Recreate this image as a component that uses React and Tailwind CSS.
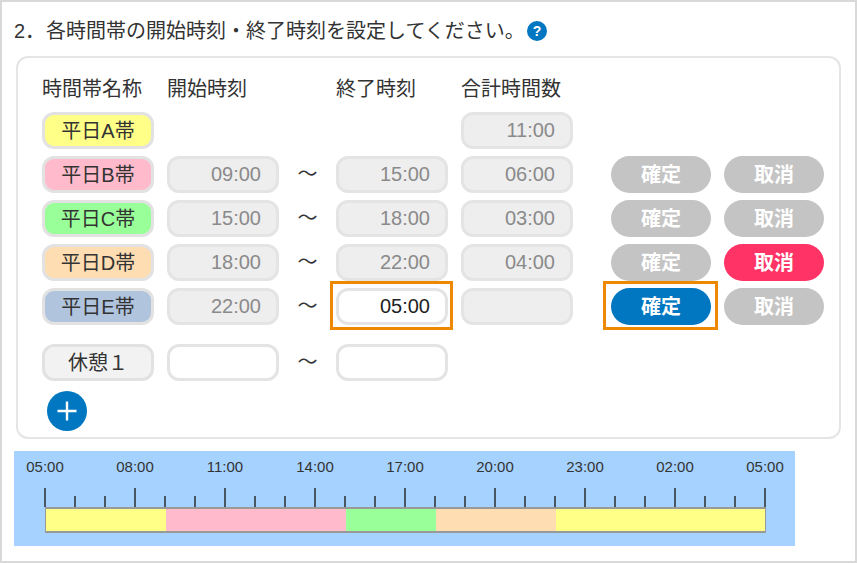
import React from 'react';

const rows = [
  { name: '平日A帯', color: 'bg-[#ffff88]', total: '11:00' },
  { name: '平日B帯', color: 'bg-[#ffbbcc]', start: '09:00', end: '15:00', total: '06:00' },
  { name: '平日C帯', color: 'bg-[#99ff99]', start: '15:00', end: '18:00', total: '03:00' },
  { name: '平日D帯', color: 'bg-[#ffddb3]', start: '18:00', end: '22:00', total: '04:00', cancelOn: true },
  { name: '平日E帯', color: 'bg-[#b0c4de]', start: '22:00', end: '05:00', total: '', active: true, cancelOn: false },
];

const labels = ['05:00', '08:00', '11:00', '14:00', '17:00', '20:00', '23:00', '02:00', '05:00'];

const segments = [
  { w: 'w-[120px]', color: 'bg-[#ffff88]' },
  { w: 'w-[180px]', color: 'bg-[#ffbbcc]' },
  { w: 'w-[90px]', color: 'bg-[#99ff99]' },
  { w: 'w-[120px]', color: 'bg-[#ffddb3]' },
  { w: 'w-[209px]', color: 'bg-[#ffff88]' },
];

const NamePill = ({ color, children }) => (
  <div className={`w-[112px] h-[37px] rounded-[12px] border-[3px] border-[#e2e2e2] flex items-center justify-center text-[20px] text-[#333] ${color}`}>
    {children}
  </div>
);

const TimeBox = ({ value, white, dark }) => (
  <div className={`w-[112px] h-[37px] rounded-[12px] border-[3px] border-[#e4e4e4] flex items-center justify-end pr-[15px] pb-[2px] text-[20px] ${white ? 'bg-white' : 'bg-[#eeeeee]'} ${dark ? 'text-[#222]' : 'text-[#8a8a8a]'}`}>
    {value}
  </div>
);

const Pill = ({ color, children }) => (
  <div className={`w-[100px] h-[37px] rounded-full flex items-center justify-center pt-[1px] text-[20px] font-bold text-white ${color}`}>
    {children}
  </div>
);

const Tilde = () => <div className="w-[57px] flex items-center justify-center pb-[2px] text-[20px] text-[#333]">～</div>;

// time scale ticks, one per hour
const Ticks = () => {
  const ticks = [];
  for (let i = 0; i <= 24; i++) {
    const major = i % 3 === 0;
    ticks.push(<line key={i} x1={i * 30 + 1} x2={i * 30 + 1} y1={major ? 0 : 8} y2={19} stroke="#222" strokeWidth="1.4" />);
  }
  return (
    <svg width="722" height="19" className="block ml-[30px]">
      {ticks}
    </svg>
  );
};

export default function App() {
  return (
    <div
      className="w-[857px] h-[563px] border-2 border-[#d9d9d9] bg-white text-[#333] overflow-hidden"
      style={{ fontFamily: '"Liberation Sans", "Noto Sans CJK JP", sans-serif' }}
    >
      {/* title */}
      <div className="flex items-center h-[54px] pl-[12px] pt-[4px] text-[20px] leading-none">
        <span className="w-[32px] whitespace-nowrap">2．</span>
        <span>各時間帯の開始時刻・終了時刻を設定してください。</span>
        <svg width="20" height="20" viewBox="0 0 20 20" className="ml-[2px]">
          <circle cx="10" cy="10" r="10" fill="#0077c0" />
          <text x="10" y="15" textAnchor="middle" fontSize="14" fontWeight="bold" fill="#fff">?</text>
        </svg>
      </div>

      {/* card */}
      <div className="ml-[14px] w-[825px] h-[383px] border-2 border-[#e5e5e5] rounded-[12px] pl-[24px] pt-[16px]">
        <div className="flex h-[38px] items-start text-[20px] leading-[30px]">
          <span className="w-[125px]">時間帯名称</span>
          <span className="w-[169px]">開始時刻</span>
          <span className="w-[125px]">終了時刻</span>
          <span>合計時間数</span>
        </div>

        <div className="flex flex-col gap-[7px]">
          {rows.map((r) => (
            <div key={r.name} className="flex">
              <NamePill color={r.color}>{r.name}</NamePill>
              {r.start ? (
                <>
                  <div className="ml-[13px]"><TimeBox value={r.start} /></div>
                  <Tilde />
                  <div className="relative">
                    <TimeBox value={r.end} white={r.active} dark={r.active} />
                    {r.active && <div className="absolute -left-[6px] -top-[7px] w-[123px] h-[49px] border-[3px] border-[#ee8800]" />}
                  </div>
                </>
              ) : (
                <div className="w-[294px]" />
              )}
              <div className="ml-[13px]"><TimeBox value={r.total} /></div>
              {r.start && (
                <div className="flex gap-[13px] ml-[38px]">
                  <div className="relative">
                    <Pill color={r.active ? 'bg-[#0077c0]' : 'bg-[#c4c4c4]'}>確定</Pill>
                    {r.active && <div className="absolute -left-[8px] -top-[7px] w-[115px] h-[49px] border-[3px] border-[#ee8800]" />}
                  </div>
                  <Pill color={r.cancelOn ? 'bg-[#ff3366]' : 'bg-[#c4c4c4]'}>取消</Pill>
                </div>
              )}
            </div>
          ))}
        </div>

        <div className="flex mt-[19px]">
          <NamePill color="bg-[#f2f2f2]">休憩１</NamePill>
          <div className="ml-[13px]"><TimeBox value="" white /></div>
          <Tilde />
          <TimeBox value="" white />
        </div>

        <div className="mt-[10px] ml-[5px] w-[40px] h-[40px] rounded-full bg-[#0077c0] flex items-center justify-center">
          <svg width="22" height="22" viewBox="0 0 22 22">
            <path d="M11 1.5V20.5M1.5 11H20.5" stroke="#fff" strokeWidth="2.4" />
          </svg>
        </div>
      </div>

      {/* timeline */}
      <div className="ml-[12px] mt-[12px] w-[781px] h-[95px] bg-[#a6d2ff]">
        <div className="flex pt-[7px] h-[37px] text-[15px] leading-[18px] text-[#333]">
          {labels.map((l, i) => (
            <span key={i} className="w-[90px] shrink-0 text-center first:ml-[-14px]">{l}</span>
          ))}
        </div>
        <Ticks />
        <div className="ml-[31px] w-[721px] h-[26px] flex border-t-2 border-b-2 border-l border-r border-[#999]">
          {segments.map((s, i) => (
            <div key={i} className={`${s.w} ${s.color}`} />
          ))}
        </div>
      </div>
    </div>
  );
}
